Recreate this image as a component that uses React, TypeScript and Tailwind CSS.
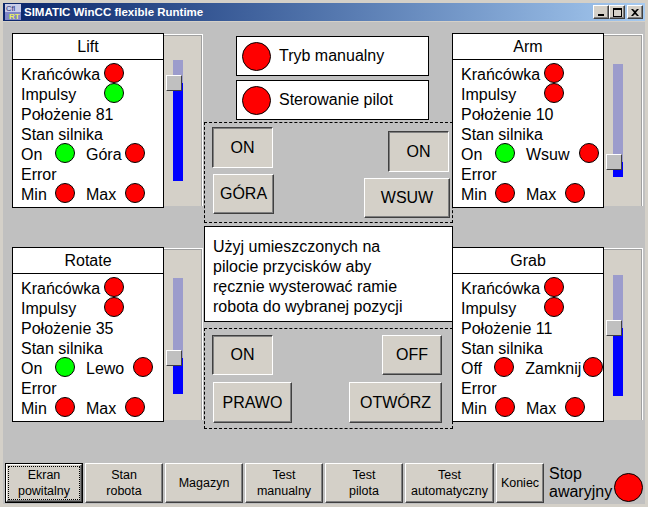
import React from 'react';

type Ind = 'r' | 'g';

function Dot({ c }: { c: Ind }) {
  return (
    <span
      className={`block shrink-0 w-[20px] h-[20px] -mt-[4px] rounded-full border border-black ${
        c === 'r' ? 'bg-[#ff0000]' : 'bg-[#00ff00]'
      }`}
    />
  );
}

function Row({ children }: { children: React.ReactNode }) {
  return <div className="h-[20px] flex items-center whitespace-nowrap">{children}</div>;
}

type PanelProps = {
  title: string;
  imp: Ind;
  pos: string;
  st: string;
  stc: Ind;
  dir: string;
  dirW: string;
};

function Panel({ title, imp, pos, st, stc, dir, dirW }: PanelProps) {
  return (
    <div className="w-[152px] h-[175px] shrink-0 border border-black bg-white flex flex-col">
      <div className="h-[26px] border-b border-black flex items-center justify-center">{title}</div>
      <div className="pl-[8px] pt-[5px] flex flex-col">
        <Row>
          <span className="w-[83px]">Krańcówka</span>
          <Dot c="r" />
        </Row>
        <Row>
          <span className="w-[83px]">Impulsy</span>
          <Dot c={imp} />
        </Row>
        <Row>
          <span>Położenie {pos}</span>
        </Row>
        <Row>
          <span>Stan silnika</span>
        </Row>
        <Row>
          <span className="w-[34px]">{st}</span>
          <Dot c={stc} />
          <span className={`ml-[11px] ${dirW}`}>{dir}</span>
          <Dot c="r" />
        </Row>
        <Row>
          <span>Error</span>
        </Row>
        <Row>
          <span className="w-[34px]">Min</span>
          <Dot c="r" />
          <span className="ml-[11px] w-[39px]">Max</span>
          <Dot c="r" />
        </Row>
      </div>
    </div>
  );
}

function Slider({ trackTop, trackH, fill }: { trackTop: number; trackH: number; fill: number }) {
  return (
    <div className="w-[39px] h-[172px] mt-px shrink-0 bg-[#d4d0c8] border-t border-r border-white">
      <div className="h-full border-t border-r border-[#a0a0a0] pt-px">
        <div
          className="relative ml-[9px] w-[10px] bg-[#9c9ccc] flex flex-col justify-end"
          style={{ marginTop: trackTop - 3, height: trackH }}
        >
          <div className="bg-[#0000ff]" style={{ height: fill }} />
          <div
            className="absolute left-[-7px] w-[16px] h-[16px] bg-[#c0c0c0] border border-t-white border-l-white border-r-[#404040] border-b-[#404040]"
            style={{ top: trackH - fill - 8 }}
          />
        </div>
      </div>
    </div>
  );
}

function Btn({
  cls,
  pressed,
  children,
}: {
  cls: string;
  pressed?: boolean;
  children: React.ReactNode;
}) {
  return (
    <div
      className={`flex items-center justify-center bg-[#d4d0c8] border ${
        pressed
          ? 'border-t-[#404040] border-l-[#404040] border-b-white border-r-white shadow-[inset_1px_1px_0_#808080]'
          : 'border-t-white border-l-white border-b-[#404040] border-r-[#404040] shadow-[inset_-1px_-1px_0_#808080]'
      } ${cls}`}
    >
      {children}
    </div>
  );
}

function NavBtn({ w, children, focused }: { w: string; children: React.ReactNode; focused?: boolean }) {
  if (focused) {
    return (
      <div className={`${w} h-[40px] border border-black`}>
        <div className="w-full h-full bg-[#d4d0c8] border border-t-white border-l-white border-b-[#404040] border-r-[#404040] shadow-[inset_-1px_-1px_0_#808080] p-[1px]">
          <div className="w-full h-full border border-dotted border-black flex items-center justify-center text-center text-[12.5px] leading-[16px]">
            {children}
          </div>
        </div>
      </div>
    );
  }
  return (
    <div
      className={`${w} h-[40px] flex items-center justify-center text-center text-[12.5px] leading-[16px] bg-[#d4d0c8] border border-t-white border-l-white border-b-[#404040] border-r-[#404040] shadow-[inset_-1px_-1px_0_#808080]`}
    >
      {children}
    </div>
  );
}

function TitleBtn({ children }: { children: React.ReactNode }) {
  return (
    <div className="w-[16px] h-[14px] bg-[#d4d0c8] border border-t-white border-l-white border-b-[#404040] border-r-[#404040] shadow-[inset_-1px_-1px_0_#808080] flex items-center justify-center">
      {children}
    </div>
  );
}

export default function App() {
  return (
    <div
      className="w-[648px] h-[507px] bg-[#d4d0c8] p-[3px] flex flex-col text-black text-[16px] leading-[20px] overflow-hidden"
      style={{ fontFamily: '"Liberation Sans", Arial, sans-serif' }}
    >
      {/* Title bar */}
      <div className="h-[18px] shrink-0 flex items-center bg-gradient-to-r from-[#0a246a] to-[#a6caf0]">
        <svg width="16" height="16" viewBox="0 0 16 16" className="ml-[2px] shrink-0">
          <rect x="0" y="0" width="16" height="16" fill="#7f86c8" />
          <rect x="0" y="0" width="16" height="8" fill="#c8cce8" />
          <text x="1" y="7" fontSize="7.5" fontFamily="Liberation Sans, Arial, sans-serif" fill="#1c2a78">Cfl</text>
          <text x="4" y="15" fontSize="8" fontWeight="bold" fontFamily="Liberation Sans, Arial, sans-serif" fill="#e8f060">RT</text>
        </svg>
        <span className="ml-[3px] text-white font-bold text-[11.5px] leading-[14px]">SIMATIC WinCC flexible Runtime</span>
        <div className="ml-auto mr-[2px] flex items-center">
          <TitleBtn>
            <svg width="8" height="7" viewBox="0 0 8 7">
              <rect x="1" y="5" width="6" height="2" fill="#000" />
            </svg>
          </TitleBtn>
          <TitleBtn>
            <svg width="9" height="9" viewBox="0 0 9 9">
              <rect x="0.5" y="0.5" width="8" height="8" fill="none" stroke="#000" />
              <rect x="0" y="1" width="9" height="1" fill="#000" />
            </svg>
          </TitleBtn>
          <div className="w-[2px]" />
          <TitleBtn>
            <svg width="8" height="7" viewBox="0 0 8 7">
              <path d="M0 0h2l2 2 2-2h2L5 3.5 8 7H6L4 5 2 7H0l3-3.5z" fill="#000" />
            </svg>
          </TitleBtn>
        </div>
      </div>

      {/* Main area */}
      <div className="mt-px flex-1 bg-[#c0c0c0] flex flex-col">
        <div className="h-[441px] flex">
          {/* Left column */}
          <div className="ml-[9px] pt-[11px] flex flex-col">
            <div className="flex items-start">
              <Panel title="Lift" imp="g" pos="81" st="On" stc="g" dir="Góra" dirW="w-[39px]" />
              <Slider trackTop={26} trackH={121} fill={98} />
            </div>
            <div className="flex items-start mt-[39px]">
              <Panel title="Rotate" imp="r" pos="35" st="On" stc="g" dir="Lewo" dirW="w-[47px]" />
              <Slider trackTop={30} trackH={116} fill={36} />
            </div>
          </div>

          {/* Middle column */}
          <div className="ml-px w-[249px] pt-[14px] flex flex-col">
            <div className="ml-[32px] w-[193px] h-[40px] border border-black bg-white flex items-center pl-[5px]">
              <span className="block w-[29px] h-[29px] rounded-full border border-black bg-[#ff0000]" />
              <span className="ml-[8px]">Tryb manualny</span>
            </div>
            <div className="mt-[4px] ml-[32px] w-[193px] h-[40px] border border-black bg-white flex items-center pl-[5px]">
              <span className="block w-[29px] h-[29px] rounded-full border border-black bg-[#ff0000]" />
              <span className="ml-[8px]">Sterowanie pilot</span>
            </div>
            <div className="mt-[2px] h-[101px] border border-dashed border-black flex justify-between">
              <div className="pl-[7px] pt-[4px] flex flex-col items-start">
                <Btn cls="w-[61px] h-[41px]" pressed>ON</Btn>
                <Btn cls="mt-[6px] ml-px w-[61px] h-[40px]">GÓRA</Btn>
              </div>
              <div className="pr-[2px] pt-[8px] flex flex-col items-end">
                <Btn cls="mr-px w-[61px] h-[41px]" pressed>ON</Btn>
                <Btn cls="mt-[6px] w-[86px] h-[40px]">WSUW</Btn>
              </div>
            </div>
            <div className="mt-[3px] h-[96px] border border-black bg-white pl-[8px] pt-[10px]">
              <div>Użyj umieszczonych na</div>
              <div>pilocie przycisków aby</div>
              <div>ręcznie wysterować ramie</div>
              <div>robota do wybranej pozycji</div>
            </div>
            <div className="mt-[6px] h-[101px] border border-dashed border-black flex justify-between">
              <div className="pl-[7px] pt-[6px] flex flex-col items-start">
                <Btn cls="w-[61px] h-[40px]" pressed>ON</Btn>
                <Btn cls="mt-[7px] ml-px w-[79px] h-[41px]">PRAWO</Btn>
              </div>
              <div className="pr-[10px] pt-[6px] flex flex-col items-end">
                <Btn cls="w-[60px] h-[40px]">OFF</Btn>
                <Btn cls="mt-[7px] w-[93px] h-[41px]">OTWÓRZ</Btn>
              </div>
            </div>
          </div>

          {/* Right column */}
          <div className="-ml-px pt-[11px] flex flex-col">
            <div className="flex items-start">
              <Panel title="Arm" imp="r" pos="10" st="On" stc="g" dir="Wsuw" dirW="w-[53px]" />
              <Slider trackTop={30} trackH={113} fill={15} />
            </div>
            <div className="flex items-start mt-[39px]">
              <Panel title="Grab" imp="r" pos="11" st="Off" stc="r" dir="Zamknij" dirW="w-[59px]" />
              <Slider trackTop={27} trackH={121} fill={68} />
            </div>
          </div>
        </div>

        {/* Bottom navigation */}
        <div className="h-[40px] ml-[2px] flex gap-[2px]">
          <NavBtn w="w-[78px]" focused>
            Ekran
            <br />
            powitalny
          </NavBtn>
          <NavBtn w="w-[78px]">
            Stan
            <br />
            robota
          </NavBtn>
          <NavBtn w="w-[78px]">Magazyn</NavBtn>
          <NavBtn w="w-[78px]">
            Test
            <br />
            manualny
          </NavBtn>
          <NavBtn w="w-[78px]">
            Test
            <br />
            pilota
          </NavBtn>
          <NavBtn w="w-[89px]">
            Test
            <br />
            automatyczny
          </NavBtn>
          <NavBtn w="w-[48px]">Koniec</NavBtn>
          <div className="ml-[3px] mt-[2px] leading-[18px] self-start">
            Stop
            <br />
            awaryjny
          </div>
          <span className="self-end mb-px block w-[29px] h-[29px] rounded-full border border-black bg-[#ff0000]" />
        </div>
      </div>
    </div>
  );
}
